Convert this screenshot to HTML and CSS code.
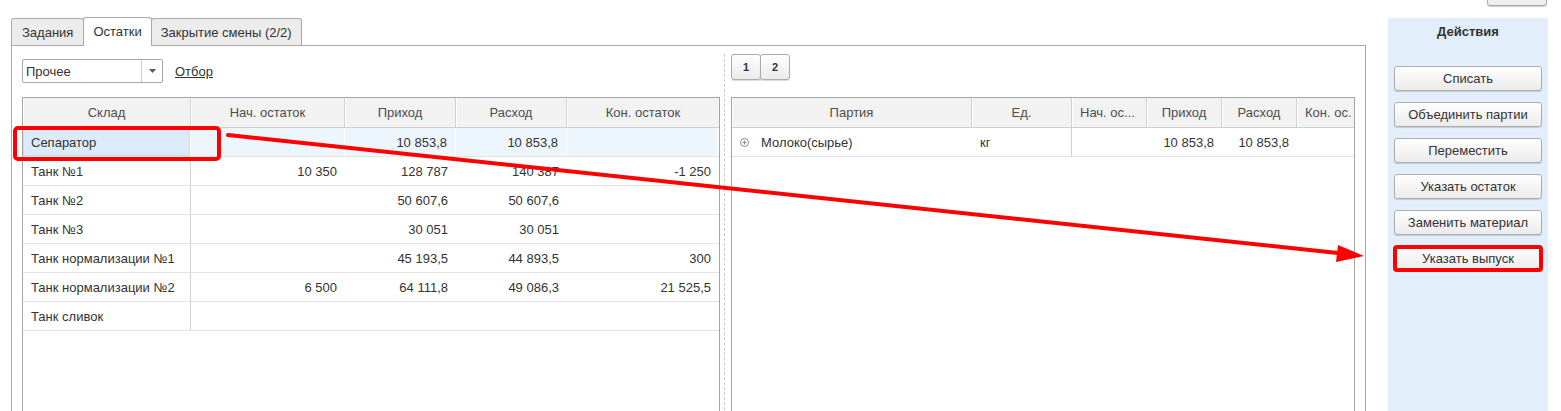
FILE: index.html
```html
<!DOCTYPE html>
<html lang="ru">
<head>
<meta charset="utf-8">
<title>Остатки</title>
<link rel="stylesheet" href="styles.css">
</head>
<body>
<div class="topbar"><button class="topbtn"></button></div>
<div class="main">
  <div class="work">
    <div class="tabs">
      <div class="tab">Задания</div>
      <div class="tab active">Остатки</div>
      <div class="tab">Закрытие смены (2/2)</div>
    </div>
    <div class="panel">
      <div class="pane-left">
        <div class="filter">
          <div class="select">
            <span class="select-value">Прочее</span>
            <span class="select-btn"><svg width="7" height="4" viewBox="0 0 7 4"><path d="M0 0h7L3.5 4z" fill="#555"/></svg></span>
          </div>
          <span class="link">Отбор</span>
        </div>
        <div class="grid grid-left">
          <div class="grow ghead">
            <div class="c">Склад</div>
            <div class="c">Нач. остаток</div>
            <div class="c">Приход</div>
            <div class="c">Расход</div>
            <div class="c">Кон. остаток</div>
          </div>
          <div class="grow row sel">
            <div class="c">Сепаратор</div>
            <div class="c num"></div>
            <div class="c num">10 853,8</div>
            <div class="c num">10 853,8</div>
            <div class="c num"></div>
          </div>
          <div class="grow row">
            <div class="c">Танк №1</div>
            <div class="c num">10 350</div>
            <div class="c num">128 787</div>
            <div class="c num">140 387</div>
            <div class="c num">-1 250</div>
          </div>
          <div class="grow row">
            <div class="c">Танк №2</div>
            <div class="c num"></div>
            <div class="c num">50 607,6</div>
            <div class="c num">50 607,6</div>
            <div class="c num"></div>
          </div>
          <div class="grow row">
            <div class="c">Танк №3</div>
            <div class="c num"></div>
            <div class="c num">30 051</div>
            <div class="c num">30 051</div>
            <div class="c num"></div>
          </div>
          <div class="grow row">
            <div class="c">Танк нормализации №1</div>
            <div class="c num"></div>
            <div class="c num">45 193,5</div>
            <div class="c num">44 893,5</div>
            <div class="c num">300</div>
          </div>
          <div class="grow row">
            <div class="c">Танк нормализации №2</div>
            <div class="c num">6 500</div>
            <div class="c num">64 111,8</div>
            <div class="c num">49 086,3</div>
            <div class="c num">21 525,5</div>
          </div>
          <div class="grow row">
            <div class="c">Танк сливок</div>
            <div class="c num"></div>
            <div class="c num"></div>
            <div class="c num"></div>
            <div class="c num"></div>
          </div>
        </div>
      </div>
      <div class="splitter"></div>
      <div class="pane-right">
        <div class="pager">
          <button class="pgbtn">1</button>
          <button class="pgbtn">2</button>
        </div>
        <div class="grid grid-right">
          <div class="grow ghead">
            <div class="c">Партия</div>
            <div class="c">Ед.</div>
            <div class="c short">Нач. ос...</div>
            <div class="c">Приход</div>
            <div class="c">Расход</div>
            <div class="c short">Кон. ос.</div>
          </div>
          <div class="grow row">
            <div class="c"><svg class="expand" width="9" height="9" viewBox="0 0 9 9"><circle cx="4.5" cy="4.5" r="4" fill="none" stroke="#8a8a8a"/><path d="M2.5 4.5h4M4.5 2.5v4" stroke="#8a8a8a"/></svg>Молоко(сырье)</div>
            <div class="c">кг</div>
            <div class="c num"></div>
            <div class="c num">10 853,8</div>
            <div class="c num">10 853,8</div>
            <div class="c num"></div>
          </div>
        </div>
      </div>
    </div>
  </div>
  <div class="side">
    <div class="side-title">Действия</div>
    <button class="act">Списать</button>
    <button class="act">Объединить партии</button>
    <button class="act">Переместить</button>
    <button class="act">Указать остаток</button>
    <button class="act">Заменить материал</button>
    <button class="act mark">Указать выпуск</button>
  </div>
</div>
<svg class="annot" width="1561" height="411" viewBox="0 0 1561 411">
  <rect x="15" y="128" width="204" height="31" rx="3" fill="none" stroke="#ff0000" stroke-width="4"/>
  <line x1="228" y1="135" x2="1340" y2="253.3" stroke="#ff0000" stroke-width="4" stroke-linecap="round"/>
  <polygon points="1364,256 1336,262 1338,245" fill="#ff0000"/>
</svg>
</body>
</html>
```

FILE: styles.css
```css
html, body {
  margin: 0;
  padding: 0;
}
body {
  font-family: "Liberation Sans", Arial, sans-serif;
  font-size: 13px;
  color: #333;
  background: #fff;
  position: relative;
  height: 411px;
  overflow: hidden;
}

.topbar {
  height: 18px;
  display: flex;
  justify-content: flex-end;
  padding-right: 14px;
}
.topbtn {
  width: 60px;
  height: 26px;
  margin-top: -20px;
  border: 1px solid #a9a9a9;
  border-radius: 3px;
  background: linear-gradient(#ffffff, #ececec);
  box-shadow: 0 1px 1px rgba(0, 0, 0, 0.2);
}

.main {
  display: flex;
  padding-left: 11px;
}
.work {
  width: 1355px;
  display: flex;
  flex-direction: column;
}

.tabs {
  display: flex;
  align-items: flex-end;
  height: 27px;
  position: relative;
  z-index: 1;
}
.tab {
  height: 27px;
  box-sizing: border-box;
  border: 1px solid #a9a9a9;
  border-bottom: none;
  border-radius: 3px 3px 0 0;
  margin-right: -1px;
  padding: 0 10px;
  background: #ececec;
  display: flex;
  align-items: center;
  color: #333;
}
.tab.active {
  background: #fff;
  height: 29px;
  margin-bottom: -1px;
  padding: 0 9px 1px;
}
.tab:last-child {
  padding: 0 9px;
}

.panel {
  height: 380px;
  box-sizing: border-box;
  border: 1px solid #a9a9a9;
  border-bottom: none;
  padding: 0 10px;
  display: flex;
}

.pane-left {
  width: 698px;
  padding-top: 13px;
  display: flex;
  flex-direction: column;
}
.filter {
  display: flex;
  align-items: center;
  gap: 12px;
  height: 24px;
  margin-bottom: 14px;
}
.select {
  width: 141px;
  height: 24px;
  box-sizing: border-box;
  border: 1px solid #a9a9a9;
  border-radius: 2px;
  display: flex;
  background: #fff;
}
.select-value {
  flex: 1;
  padding-left: 3px;
  display: flex;
  align-items: center;
}
.select-btn {
  width: 20px;
  border-left: 1px solid #c8c8c8;
  display: flex;
  align-items: center;
  justify-content: center;
}
.link {
  color: #333;
  text-decoration: underline;
}

.splitter {
  margin: 8px 6px 0 4px;
  border-left: 1px dashed #c8c8c8;
}

.pane-right {
  width: 624px;
  padding-top: 8px;
  display: flex;
  flex-direction: column;
}
.pager {
  display: flex;
  margin-bottom: 17px;
}
.pgbtn {
  width: 30px;
  height: 26px;
  margin-right: -1px;
  border: 1px solid #ababab;
  border-radius: 3px;
  background: linear-gradient(#ffffff, #ebebeb);
  box-shadow: 0 1px 1px rgba(0, 0, 0, 0.15);
  font-family: "Liberation Sans", Arial, sans-serif;
  font-size: 11px;
  font-weight: bold;
  color: #333;
  padding: 0;
}

.grid {
  flex: 1;
  border: 1px solid #a5a5a5;
  border-bottom: none;
  box-sizing: border-box;
}
.grow {
  display: grid;
  box-sizing: border-box;
}
.grid-left .grow {
  grid-template-columns: 168px 154px 111px 111px 152px;
}
.grid-right .grow {
  grid-template-columns: 240px 100px 75px 75px 75px 57px;
}
.c {
  box-sizing: border-box;
  padding: 0 8px;
  display: flex;
  align-items: center;
  white-space: nowrap;
  overflow: hidden;
  min-width: 0;
}
.num {
  justify-content: flex-end;
}

.ghead {
  height: 30px;
  background: #f2f2f2;
  border-bottom: 1px solid #cfcfcf;
  color: #4d4d4d;
}
.ghead .c {
  justify-content: center;
  border-right: 1px solid #d2d2d2;
  box-shadow: inset 1px 0 #ffffff;
}
.ghead .c:last-child {
  border-right: none;
}
.ghead .c.short {
  justify-content: flex-start;
  padding: 0 0 0 8px;
}

.row {
  height: 29px;
  border-bottom: 1px solid #e3e3e3;
}
.grid-left .row .c:first-child {
  border-right: 1px solid #d0d0d0;
}
.grid-right .row .c:nth-child(2) {
  border-right: 1px solid #d0d0d0;
}
.row.sel {
  background: #edf5fd;
}
.row.sel .c {
  border-right: 1px solid #fff;
}
.grid-left .row.sel .c:first-child {
  background: #dcebfa;
  border-right: 1px solid #fff;
  box-shadow: inset 0 0 0 1px #c6def4;
}
.expand {
  margin-right: 12px;
  flex: none;
}

.side {
  margin-left: 22px;
  width: 160px;
  height: 393px;
  box-sizing: border-box;
  padding: 0 6px;
  background: #e2eefa;
}
.side-title {
  height: 48px;
  box-sizing: border-box;
  padding-top: 6px;
  line-height: 15px;
  text-align: center;
  font-weight: bold;
  color: #333;
}
.act {
  display: block;
  width: 148px;
  height: 25px;
  margin: 0 0 11px 0;
  padding: 0;
  border: 1px solid #aeaeae;
  border-radius: 3px;
  background: linear-gradient(#ffffff, #ebebeb);
  box-shadow: 0 1px 1px rgba(0, 0, 0, 0.15);
  font-family: "Liberation Sans", Arial, sans-serif;
  font-size: 13px;
  color: #333;
}
.act.mark {
  outline: 4px solid #ff0000;
  outline-offset: -3px;
}

.annot {
  position: absolute;
  left: 0;
  top: 0;
  pointer-events: none;
}
```
